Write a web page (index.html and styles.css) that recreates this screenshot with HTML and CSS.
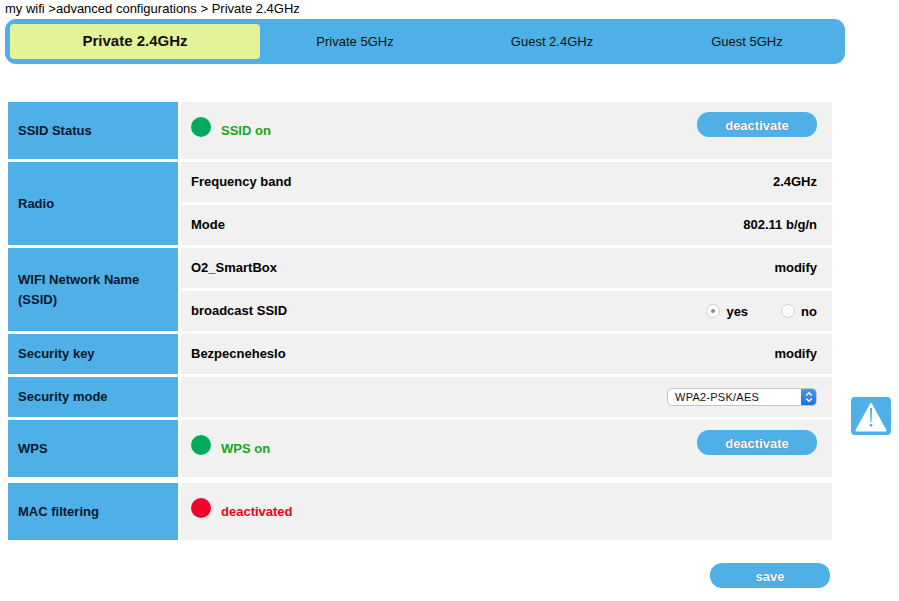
FILE: index.html
```html
<!DOCTYPE html>
<html lang="en">
<head>
<meta charset="utf-8">
<title>Private 2.4GHz</title>
<link rel="stylesheet" href="styles.css">
</head>
<body>
<div class="crumb">my wifi &gt;advanced configurations &gt; Private 2.4GHz</div>
<nav class="tabs">
  <div class="tab active">Private 2.4GHz</div>
  <div class="tab t2">Private 5GHz</div>
  <div class="tab t3">Guest 2.4GHz</div>
  <div class="tab t4">Guest 5GHz</div>
</nav>
<main class="table">
  <section class="group">
    <div class="label">SSID Status</div>
    <div class="rows"><div class="row tall">
      <div class="status"><span class="dot green"></span><span class="state on">SSID on</span></div>
      <button class="btn">deactivate</button>
    </div></div>
  </section>
  <section class="group">
    <div class="label">Radio</div>
    <div class="rows">
      <div class="row"><span>Frequency band</span><span>2.4GHz</span></div>
      <div class="row"><span>Mode</span><span>802.11 b/g/n</span></div>
    </div>
  </section>
  <section class="group">
    <div class="label wrap">WIFI Network Name (SSID)</div>
    <div class="rows">
      <div class="row"><span>O2_SmartBox</span><span>modify</span></div>
      <div class="row"><span>broadcast SSID</span>
        <div class="radios">
          <span class="radio-item"><span class="radio checked"></span>yes</span>
          <span class="radio-item"><span class="radio"></span>no</span>
        </div>
      </div>
    </div>
  </section>
  <section class="group">
    <div class="label single">Security key</div>
    <div class="rows"><div class="row"><span>Bezpecneheslo</span><span>modify</span></div></div>
  </section>
  <section class="group">
    <div class="label single">Security mode</div>
    <div class="rows"><div class="row end">
      <div class="select"><span class="select-text">WPA2-PSK/AES</span>
        <span class="select-arrow"><svg width="8" height="12" viewBox="0 0 8 12"><path d="M1.2 4.600 4 1.800l2.800 2.800M1.200 7.400 4 10.200l2.800-2.800" fill="none" stroke="#fff" stroke-width="1.400"/></svg></span>
      </div>
    </div></div>
  </section>
  <section class="group">
    <div class="label">WPS</div>
    <div class="rows"><div class="row tall">
      <div class="status"><span class="dot green"></span><span class="state on">WPS on</span></div>
      <button class="btn">deactivate</button>
    </div></div>
  </section>
  <section class="group last">
    <div class="label">MAC filtering</div>
    <div class="rows"><div class="row tall">
      <div class="status"><span class="dot red"></span><span class="state off">deactivated</span></div>
    </div></div>
  </section>
</main>
<div class="actions"><button class="btn">save</button></div>
<div class="alert">
  <svg width="40" height="38" viewBox="0 0 40 38"><path d="M20 7 5.500 33.500h29z" fill="#fff" stroke="#fff" stroke-width="2" stroke-linejoin="round"/><path d="M19 11h2l-.4 14h-1.200z" fill="#4fb0e8"/><circle cx="20" cy="28.300" r="1.400" fill="#4fb0e8"/></svg>
</div>
</body>
</html>
```
FILE: styles.css
```css
* { box-sizing: border-box; }
html, body { margin: 0; padding: 0; }
body {
  width: 899px;
  height: 601px;
  position: relative;
  overflow: hidden;
  background: #fff;
  color: #000;
  font-family: "Liberation Sans", Arial, sans-serif;
  font-size: 13px;
}
.crumb {
  height: 19px;
  padding: 1px 0 0 5px;
  font-size: 13px;
  line-height: 16px;
}
.tabs {
  display: flex;
  width: 840px;
  height: 45px;
  margin-left: 5px;
  padding: 5px;
  background: #4fb0e8;
  border-radius: 11px;
}
.tab {
  display: flex;
  align-items: center;
  justify-content: center;
  font-size: 13px;
  color: #111;
}
.tab.t2 { flex: 0 0 190px; }
.tab.t3 { flex: 0 0 204px; }
.tab.t4 { flex: 0 0 186px; }
.tab.active {
  flex: 0 0 250px;
  padding-bottom: 2px;
  background: #e5f398;
  border-radius: 4px;
  font-size: 15px;
  font-weight: bold;
}
.table {
  width: 824px;
  margin: 38px 0 0 8px;
  display: flex;
  flex-direction: column;
  gap: 3px;
  font-weight: bold;
}
.group {
  display: flex;
  gap: 3px;
}
.group.last { margin-top: 3px; }
.label {
  flex: 0 0 170px;
  display: flex;
  align-items: center;
  padding-left: 10px;
  background: #4fb0e8;
  color: #06182a;
}
.label.single { padding-bottom: 2px; }
.label.wrap {
  line-height: 20px;
  padding-right: 20px;
}
.rows {
  flex: 1;
  display: flex;
  flex-direction: column;
  gap: 3px;
}
.row {
  height: 40px;
  display: flex;
  align-items: center;
  justify-content: space-between;
  padding: 0 15px 2px 10px;
  background: #f1f1f1;
}
.row.tall {
  height: 57px;
  padding-bottom: 0;
  align-items: flex-start;
}
.row.end {
  justify-content: flex-end;
  padding-bottom: 0;
}
.status {
  display: flex;
  align-items: center;
  padding-top: 15px;
}
.dot {
  width: 20px;
  height: 20px;
  border-radius: 50%;
}
.dot.green { background: #00ab5b; }
.dot.red { background: #f50029; }
.state {
  margin-left: 10px;
  position: relative;
  top: 3px;
}
.state.on { color: #1aa519; }
.state.off { color: #f5001e; }
.btn {
  display: block;
  width: 120px;
  height: 25px;
  padding: 2px 0 0;
  border: 0;
  border-radius: 12px;
  background: #4fb0e8;
  color: #fff;
  font: bold 13px "Liberation Sans", Arial, sans-serif;
  text-shadow: 0 0 1px #555;
}
.row.tall .btn { margin-top: 10px; }
.radios {
  display: flex;
  align-items: center;
  padding-top: 2px;
}
.radio-item {
  display: flex;
  align-items: center;
}
.radio-item + .radio-item { margin-left: 33px; }
.radio {
  width: 14px;
  height: 14px;
  margin-right: 6px;
  border-radius: 50%;
  border: 1px solid #d0d0d0;
  background: #fbfbfb;
  display: flex;
  align-items: center;
  justify-content: center;
}
.radio.checked::after {
  content: "";
  width: 4px;
  height: 4px;
  border-radius: 50%;
  background: #8a8a8a;
}
.select {
  width: 150px;
  height: 18px;
  display: flex;
  border: 1px solid #c4c4c4;
  border-radius: 5px;
  background: #fff;
  overflow: hidden;
  font-weight: normal;
  font-size: 11px;
  letter-spacing: .25px;
}
.select-text {
  flex: 1;
  padding-left: 7px;
  line-height: 16px;
  color: #111;
}
.select-arrow {
  width: 15px;
  background: linear-gradient(#4a96f2, #1f6fe6);
  display: flex;
  align-items: center;
  justify-content: center;
}
.actions {
  width: 830px;
  margin-top: 23px;
  display: flex;
  justify-content: flex-end;
}
.alert {
  position: absolute;
  left: 851px;
  top: 397px;
  width: 40px;
  height: 38px;
  background: #4fb0e8;
  border-radius: 4px;
}
.alert svg { display: block; }
```
